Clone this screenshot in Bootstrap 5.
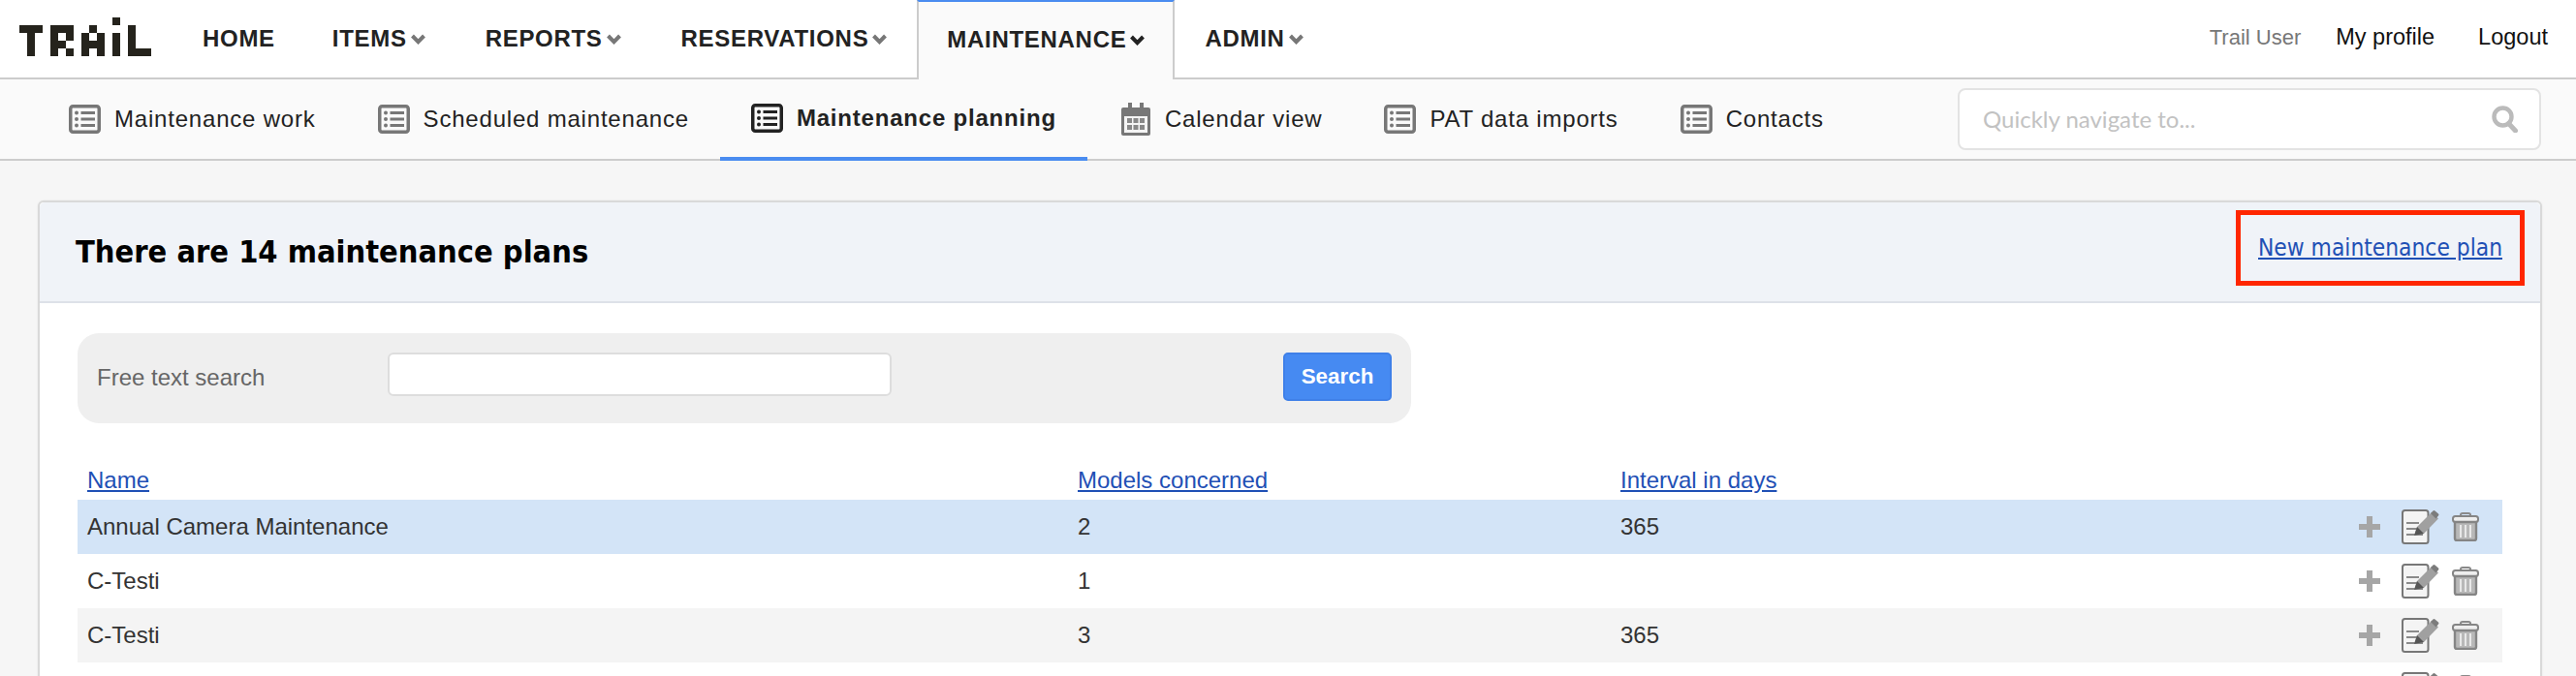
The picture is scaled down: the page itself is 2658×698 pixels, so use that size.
<!DOCTYPE html>
<html lang="en">
<head>
<meta charset="utf-8">
<title>Maintenance planning</title>
<link href="https://cdn.jsdelivr.net/npm/bootstrap@5.3.0/dist/css/bootstrap.min.css" rel="stylesheet">
<style>
html,body{height:698px;overflow:hidden}
body{background:#f6f6f6;font-family:"Liberation Sans",Arial,sans-serif;color:#333;font-size:24px}
.topbar{height:82px;background:#fff;border-bottom:2px solid #ccc}
.logo-box{width:178px;padding-left:20px}
.main-item{height:82px;padding:0 31px 2px;color:#222;font-weight:700;font-size:24px;letter-spacing:.7px;text-decoration:none;display:flex;align-items:center;gap:4px}
.main-item.first-item{padding-right:28px}
.main-item.on{background:#fafafa;border:2px solid #ccc;border-top:2px solid #4a8cf0;border-bottom:0;padding:0 29px 2px}
.user-links{padding-right:29px;padding-bottom:3px;font-size:23.5px;color:#111}
.user-links a{color:#111;text-decoration:none}
.user-name{color:#777;font-size:22px;margin-right:36px}
.prof-link{margin-right:45px}
.subbar{height:84px;background:#fafafa;border-bottom:2px solid #ccc;padding-left:39px;padding-right:36px}
.sub-item{height:82px;padding:0 32px;display:flex;align-items:center;gap:14px;color:#222;text-decoration:none;letter-spacing:.8px;font-size:24px}
.sub-item.on{font-weight:700;border-bottom:4px solid #4a8cf0;height:84px}
.sub-item .cal-icon{margin-left:3px;margin-right:1px}
.quick-box{width:602px;height:64px;margin-top:9px;background:#fff;border:2px solid #e3e3e3;border-radius:8px;padding:0 22px 0 24px}
.quick-input{border:0;outline:0;background:transparent;font-family:Lato,sans-serif;font-size:24px;width:500px;padding:0}
.quick-input::placeholder{color:#c2c2c2}
.page-wrap{padding:41px 35px 0 39px}
.plan-card{border:2px solid #d9d9d9;border-radius:6px;background:#fff;box-shadow:0 0 2px rgba(0,0,0,.08)}
.plan-head{height:104px;background:#f0f3f8;border-bottom:2px solid #dde1e8;padding:0 0 0 37px;border-radius:5px 5px 0 0}
.plan-title{font-family:"DejaVu Sans Condensed","DejaVu Sans",sans-serif;font-weight:700;font-size:32.3px;color:#000;margin:0}
.new-box{width:298px;height:78px;border:5px solid #ff2600;margin:8px 16px 0 0;display:flex;align-items:center;justify-content:center}
.new-box a,.th-link{color:#1f50b5}
.new-box a{font-family:"DejaVu Sans Condensed","DejaVu Sans",sans-serif;font-size:24.3px}
.plan-body{padding:31px 39px 0 39px}
.filter-panel{width:1376px;height:93px;background:#efefef;border-radius:22px;padding:20px 20px 0 20px}
.filter-label{width:300px;line-height:52px;color:#666;font-size:24px}
.filter-input{width:520px;height:45px;border:2px solid #ddd;border-radius:6px;background:#fff}
.btn-find{width:112px;height:50px;background:#468af2;border:2px solid #3f80e8;border-radius:5px;color:#fff;font-weight:700;font-size:22.4px;padding:0}
.btn-find:hover{background:#468af2;color:#fff;border-color:#3f80e8}
.plan-table{width:100%;margin:39px 0 0;table-layout:fixed;border-collapse:collapse;font-size:24px}
.plan-table th{height:40px;font-weight:400;padding:0 10px 5px;vertical-align:bottom;line-height:30px;border:0}
.plan-table td{height:56px;padding:0 10px;vertical-align:middle;color:#333;border:0}
.row-sel td{background:#d3e4f7}
.row-alt td{background:#f4f4f4}
.act-cell{display:flex;align-items:center;justify-content:flex-end;gap:13px;padding-right:24px;height:56px}
.act-plus{margin-right:9px}
</style>
</head>
<body>
<svg width="0" height="0" class="d-block" style="position:absolute" aria-hidden="true">
<defs>
<symbol id="ic-list" viewBox="0 0 33 30">
<rect x="1.75" y="1.75" width="29.5" height="26.5" rx="2.5" fill="none" stroke="currentColor" stroke-width="3.5"/>
<circle cx="8" cy="8.5" r="2" fill="currentColor"/><circle cx="8" cy="15" r="2" fill="currentColor"/><circle cx="8" cy="21.5" r="2" fill="currentColor"/>
<path d="M12.5 8.5H27M12.5 15H27M12.5 21.5H27" stroke="currentColor" stroke-width="3"/>
</symbol>
<symbol id="ic-edit" viewBox="0 0 39 36">
<rect x="1" y="1" width="26.500" height="34" rx="2.500" fill="#f4f4f4" stroke="#777" stroke-width="2"/>
<path d="M5 14H18M5 20H16M5 26H22" stroke="#8a8a8a" stroke-width="2.200"/>
<path d="M13 27l3-9L31 3l7 6.500L23 25z" fill="#a0a0a0"/>
<path d="M13 27l3-9 7 7z" fill="#555"/>
<path d="M30 4l2.500-2.500q1-1 2 0l3.500 3q1 1 0 2L35.500 9.500z" fill="#7c7c7c"/>
</symbol>
<symbol id="ic-trash" viewBox="0 0 28 30">
<path d="M9 4V2.500Q9 1 11 1h6q2 0 2 1.500V4" fill="none" stroke="#8a8a8a" stroke-width="2"/>
<rect x="1" y="4" width="26" height="6" rx="2.500" fill="#eee" stroke="#858585" stroke-width="2"/>
<path d="M3 10h22v17q0 2-2 2H5q-2 0-2-2z" fill="#b8b8b8" stroke="#858585" stroke-width="2.400"/>
<path d="M9 13v13M14 13v13M19 13v13" stroke="#e8e8e8" stroke-width="2"/>
</symbol>
<symbol id="ic-chev" viewBox="0 0 15 11">
<path d="M1.500 2L7.500 8.200 13.500 2" fill="none" stroke="currentColor" stroke-width="4"/>
</symbol>
</defs>
</svg>

<header class="topbar d-flex">
  <div class="logo-box d-flex align-items-start">
    <svg width="136" height="40" viewBox="0 0 136 40" fill="#25231c" role="img" aria-label="Trail logo" style="margin-top:18px">
      <path d="M0 8h24v8h-8v24H8V16H0z"/>
      <path d="M32 8h24v8H32zM32 16h8v8h-8zM48 16h8v8h-8zM32 24h16v8H32zM32 32h8v8h-8zM48 32h8v8h-8z"/>
      <path d="M72 8h8v8h-8zM64 16h8v8h-8zM80 16h8v8h-8zM64 24h24v8H64zM64 32h8v8h-8zM80 32h8v8h-8z"/>
      <path d="M96 0h8v8h-8zM96 16h8v24h-8z"/>
      <path d="M112 8h8v24h16v8h-24z"/>
    </svg>
  </div>
  <nav class="d-flex">
    <a class="main-item first-item" href="#">HOME</a>
    <a class="main-item" href="#">ITEMS<svg width="15" height="11" style="color:#777"><use href="#ic-chev"/></svg></a>
    <a class="main-item" href="#">REPORTS<svg width="15" height="11" style="color:#777"><use href="#ic-chev"/></svg></a>
    <a class="main-item" href="#">RESERVATIONS<svg width="15" height="11" style="color:#777"><use href="#ic-chev"/></svg></a>
    <a class="main-item on" href="#">MAINTENANCE<svg width="15" height="11" style="color:#222"><use href="#ic-chev"/></svg></a>
    <a class="main-item" href="#">ADMIN<svg width="15" height="11" style="color:#777"><use href="#ic-chev"/></svg></a>
  </nav>
  <div class="user-links ms-auto d-flex align-items-center">
    <span class="user-name">Trail User</span>
    <a class="prof-link" href="#">My profile</a>
    <a href="#">Logout</a>
  </div>
</header>

<div class="subbar d-flex">
  <a class="sub-item" href="#"><svg width="33" height="30" style="color:#777"><use href="#ic-list"/></svg><span>Maintenance work</span></a>
  <a class="sub-item" href="#"><svg width="33" height="30" style="color:#777"><use href="#ic-list"/></svg><span>Scheduled maintenance</span></a>
  <a class="sub-item on" href="#"><svg width="33" height="30" style="color:#222"><use href="#ic-list"/></svg><span>Maintenance planning</span></a>
  <a class="sub-item" href="#"><svg class="cal-icon" width="30" height="34" viewBox="0 0 30 34">
    <path d="M2 5h26q2 0 2 2v25q0 2-2 2H2q-2 0-2-2V7q0-2 2-2z" fill="#777"/>
    <rect x="7" y="0" width="4" height="8" fill="#777"/><rect x="19" y="0" width="4" height="8" fill="#777"/>
    <rect x="3" y="14" width="24" height="17" fill="#f4f4f4"/>
    <path fill="#888" d="M6 16h5v5H6zM12.500 16h5v5h-5zM19 16h5v5h-5zM6 23h5v5H6zM12.500 23h5v5h-5zM19 23h5v5h-5z"/>
  </svg><span>Calendar view</span></a>
  <a class="sub-item" href="#"><svg width="33" height="30" style="color:#777"><use href="#ic-list"/></svg><span>PAT data imports</span></a>
  <a class="sub-item" href="#"><svg width="33" height="30" style="color:#777"><use href="#ic-list"/></svg><span>Contacts</span></a>
  <div class="quick-box ms-auto d-flex align-items-center justify-content-between">
    <input class="quick-input" type="text" placeholder="Quickly navigate to...">
    <svg width="27" height="28" viewBox="0 0 27 28"><circle cx="11.500" cy="11.500" r="9" fill="none" stroke="#bbb" stroke-width="4.400"/><path d="M17.500 18.500L24.500 26" stroke="#bbb" stroke-width="5" stroke-linecap="round"/></svg>
  </div>
</div>

<main class="page-wrap">
  <section class="plan-card">
    <div class="plan-head d-flex justify-content-between">
      <h1 class="plan-title align-self-center">There are 14 maintenance plans</h1>
      <div class="new-box"><a href="#">New maintenance plan</a></div>
    </div>
    <div class="plan-body">
      <form class="filter-panel d-flex align-items-start">
        <label class="filter-label">Free text search</label>
        <input class="filter-input" type="text">
        <button class="btn btn-find ms-auto" type="button">Search</button>
      </form>
      <table class="plan-table">
        <colgroup><col style="width:1022px"><col style="width:560px"><col style="width:560px"><col></colgroup>
        <thead><tr><th><a class="th-link" href="#">Name</a></th><th><a class="th-link" href="#">Models concerned</a></th><th><a class="th-link" href="#">Interval in days</a></th><th></th></tr></thead>
        <tbody>
          <tr class="row-sel"><td>Annual Camera Maintenance</td><td>2</td><td>365</td><td class="p-0"><div class="act-cell"><svg class="act-plus" width="22" height="22" viewBox="0 0 22 22"><path d="M11 0v22M0 11h22" stroke="#a6a6a6" stroke-width="6"/></svg><svg width="39" height="36"><use href="#ic-edit"/></svg><svg width="28" height="30"><use href="#ic-trash"/></svg></div></td></tr>
          <tr><td>C-Testi</td><td>1</td><td></td><td class="p-0"><div class="act-cell"><svg class="act-plus" width="22" height="22" viewBox="0 0 22 22"><path d="M11 0v22M0 11h22" stroke="#a6a6a6" stroke-width="6"/></svg><svg width="39" height="36"><use href="#ic-edit"/></svg><svg width="28" height="30"><use href="#ic-trash"/></svg></div></td></tr>
          <tr class="row-alt"><td>C-Testi</td><td>3</td><td>365</td><td class="p-0"><div class="act-cell"><svg class="act-plus" width="22" height="22" viewBox="0 0 22 22"><path d="M11 0v22M0 11h22" stroke="#a6a6a6" stroke-width="6"/></svg><svg width="39" height="36"><use href="#ic-edit"/></svg><svg width="28" height="30"><use href="#ic-trash"/></svg></div></td></tr>
          <tr><td></td><td></td><td></td><td class="p-0"><div class="act-cell"><svg class="act-plus" width="22" height="22" viewBox="0 0 22 22"><path d="M11 0v22M0 11h22" stroke="#a6a6a6" stroke-width="6"/></svg><svg width="39" height="36"><use href="#ic-edit"/></svg><svg width="28" height="30"><use href="#ic-trash"/></svg></div></td></tr>
        </tbody>
      </table>
    </div>
  </section>
</main>
<script src="https://cdn.jsdelivr.net/npm/bootstrap@5.3.0/dist/js/bootstrap.bundle.min.js"></script>
</body>
</html>
